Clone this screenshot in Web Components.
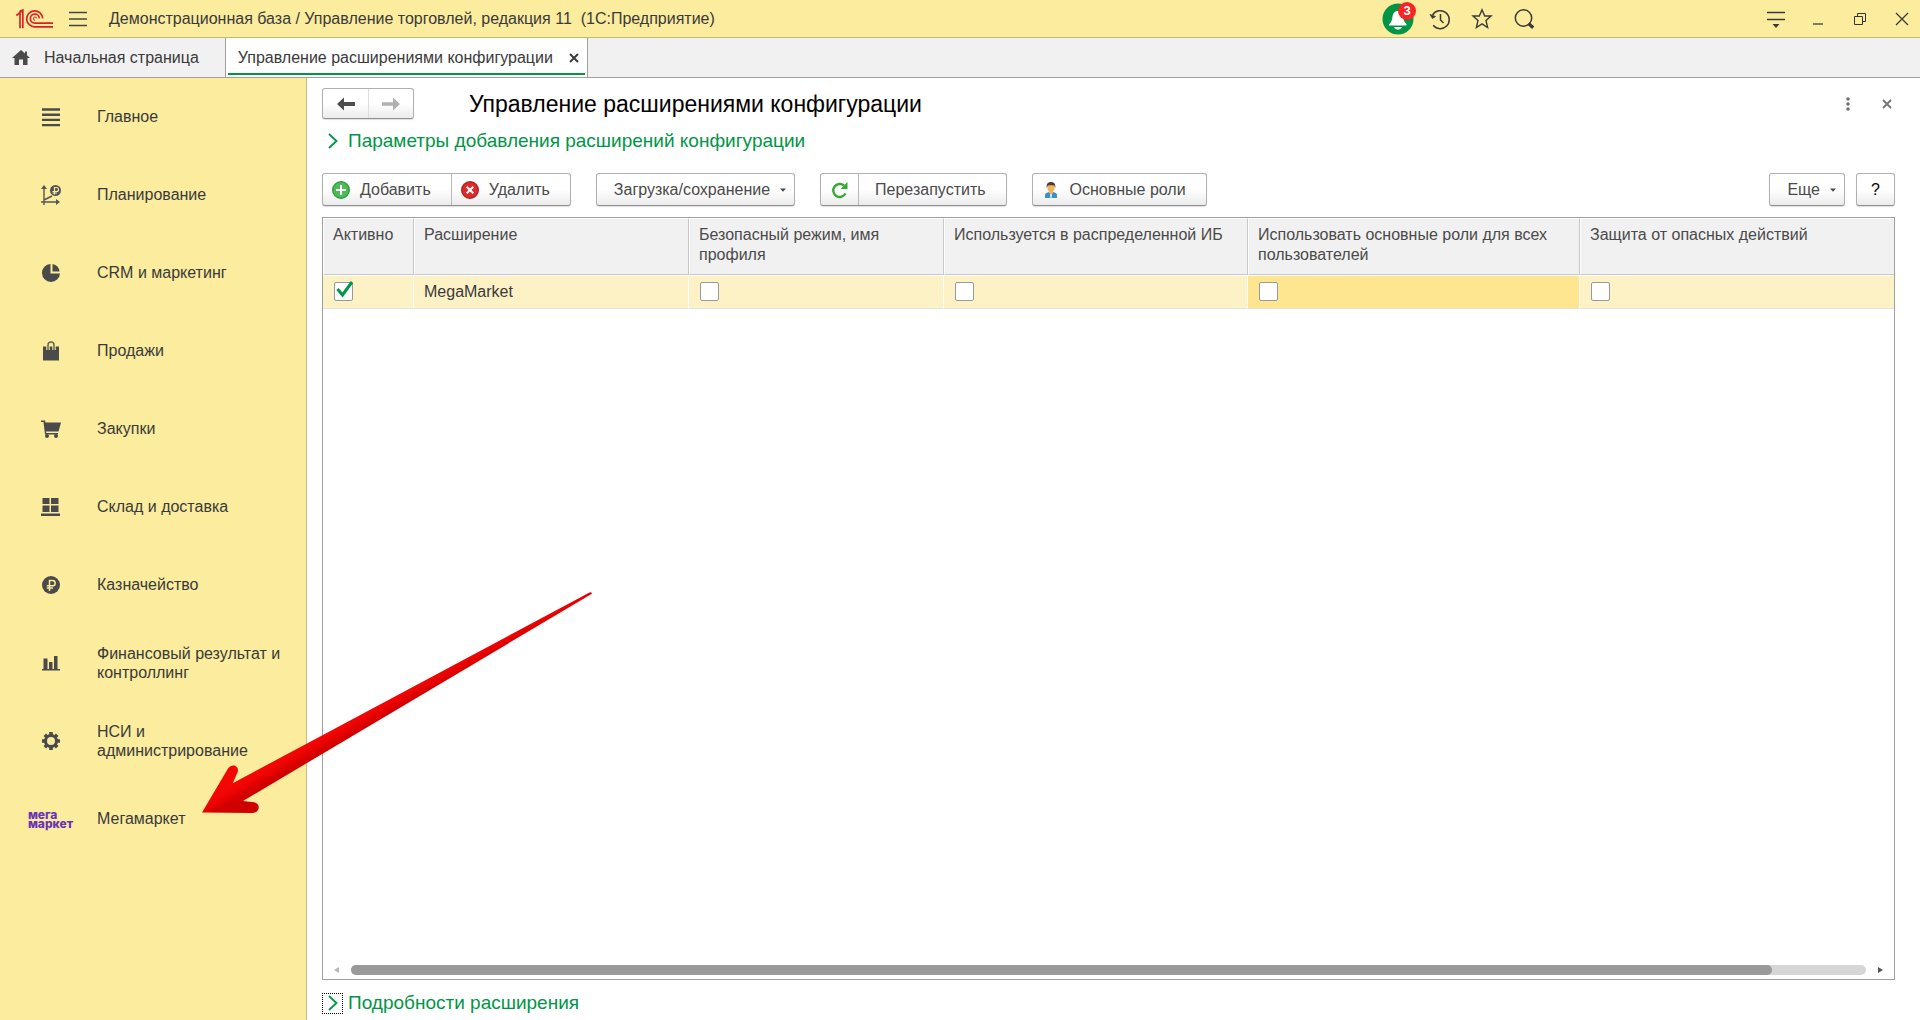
<!DOCTYPE html>
<html lang="ru">
<head>
<meta charset="utf-8">
<title>Управление расширениями конфигурации</title>
<style>
  html, body { height: 100%; }
  body {
    margin: 0; background: #fff; color: #3a3a3a; overflow: hidden;
    font: 16px/20px "Liberation Sans", Arial, sans-serif;
    --brand: #fbec9e; --line: #a0a0a0; --green: #009646; --ink: #4a4a4a;
  }
</style>
</head>
<body>
<ext-app></ext-app>
<script>
const base = `
  *, *::before, *::after { box-sizing: border-box; }
  button { font: inherit; color: inherit; background: none; border: 0; padding: 0; margin: 0; cursor: pointer; display: flex; align-items: center; }
  a { color: inherit; text-decoration: none; }
  svg { display: block; flex: none; }
`;
class Base extends HTMLElement {
  connectedCallback() {
    if (this.shadowRoot) return;
    const t = document.createElement('template');
    t.innerHTML = `<style>${base}${this.css()}</style>${this.html()}`;
    this.attachShadow({ mode: 'open' }).append(t.content.cloneNode(true));
  }
}

const icons = {
  logo: `<svg width="38" height="20" viewBox="0 0 114 60" fill="none" stroke="#dc1f26" stroke-width="5"><path d="M4 19.500 15 11V58M13 7.500 23.500 3V58M14 8H25"/><path d="M83 28A24 24 0 1 0 60 53.500H114"/><path d="M73 28A13.500 13.500 0 1 0 60 42.500H114"/><path d="M60 34A5 5 0 1 1 65 28" stroke-width="3"/></svg>`,
  menu: `<svg width="18" height="16" viewBox="0 0 18 16"><path d="M0 1.500H18M0 8H18M0 14.500H18" stroke="#444" stroke-width="1.500"/></svg>`,
  home: `<svg width="18" height="15" viewBox="0 0 18 15"><path d="M9 0 0 8H2.500V15H7V9.500H11V15H15.500V8H18L15 5.300V1.500H13V3.600Z" fill="#4a4a4a"/></svg>`,
  bell: `<svg width="32" height="32" viewBox="0 0 32 32"><circle cx="16" cy="16" r="15.500" fill="#009646"/><path d="M15.500 8c-3 0-4.500 2.500-5 5.500-.5 3.500-1 5.500-3.500 8V22.500H24.500V21c-2.500-2-3-4-3.500-7.500C20.500 10.500 18.500 8 15.500 8ZM12 24H20c-1 2.200-2.500 2.500-4 2.500S13 26 12 24Z" fill="#fff"/></svg>`,
  history: `<svg width="22" height="22" viewBox="0 0 22 22" fill="none" stroke="#3a3a3a" stroke-width="1.500"><path d="M3.600 7A9 9 0 1 1 4.200 17.300M11.500 6V12L14.500 15"/><path d="M1 6.500 6.500 8.500 3.500 10.500Z" fill="#3a3a3a" stroke-width=".8"/></svg>`,
  star: `<svg width="22" height="22" viewBox="0 0 22 22" fill="none" stroke="#3a3a3a" stroke-width="1.400"><path d="M11 1.800 13.700 8H20L15 12.400 16.600 19.500 11 15.800 5.400 19.500 7 12.400 2 8H8.300Z"/></svg>`,
  search: `<svg width="22" height="22" viewBox="0 0 22 22" fill="none" stroke="#3a3a3a"><circle cx="10.500" cy="10" r="8.200" stroke-width="1.500"/><path d="M15.500 15.500 20.200 19.800" stroke-width="3.200"/></svg>`,
  settings: `<svg width="18" height="18" viewBox="0 0 18 18"><path d="M0 2.500H18M0 9.500H18" stroke="#3a3a3a" stroke-width="1.500"/><path d="M5.500 14H12.500L9 18Z" fill="#3a3a3a"/></svg>`,
  minimize: `<svg width="12" height="12" viewBox="0 0 12 12"><path d="M1 11H11" stroke="#3a3a3a" stroke-width="1.300"/></svg>`,
  restore: `<svg width="12" height="12" viewBox="0 0 12 12" fill="none" stroke="#333"><path d="M.5 3.500H8.500V11.500H.5ZM3.500 3.500V.5H11.500V8.500H8.500"/></svg>`,
  close: `<svg width="14" height="14" viewBox="0 0 14 14"><path d="M1 1 13 13M13 1 1 13" stroke="#3a3a3a" stroke-width="1.300"/></svg>`,
  smallClose: `<svg width="10" height="10" viewBox="0 0 10 10"><path d="M1 1 9 9M9 1 1 9" stroke="currentColor" stroke-width="1.900"/></svg>`,
  dots: `<svg width="4" height="14" viewBox="0 0 4 14" fill="#707070"><circle cx="2" cy="2" r="1.800"/><circle cx="2" cy="7" r="1.800"/><circle cx="2" cy="12" r="1.800"/></svg>`,
  back: `<svg width="18" height="14" viewBox="0 0 18 14"><path d="M0 7 7 .5V5H18V9H7V13.500Z" fill="#4d4d4d"/></svg>`,
  forward: `<svg width="18" height="14" viewBox="0 0 18 14"><path d="M18 7 11 .5V5.200H0V8.800H11V13.500Z" fill="#b0b0b0"/></svg>`,
  chevron: `<svg width="10" height="16" viewBox="0 0 10 16"><path d="M1 1 8.500 8 1 15" fill="none" stroke="#009646" stroke-width="1.800"/></svg>`,
  add: `<svg width="18" height="18" viewBox="0 0 18 18"><circle cx="9" cy="9" r="8.300" fill="#4dbb58" stroke="#2f9e40" stroke-width="1.400"/><path d="M9 4V14M4 9H14" stroke="#fff" stroke-width="2"/></svg>`,
  remove: `<svg width="18" height="18" viewBox="0 0 18 18"><circle cx="9" cy="9" r="8.300" fill="#dc2b2b" stroke="#b82020" stroke-width="1.400"/><path d="M5.700 5.700 12.300 12.300M12.300 5.700 5.700 12.300" stroke="#fff" stroke-width="2"/></svg>`,
  refresh: `<svg width="18" height="18" viewBox="0 0 18 18"><path d="M14.500 12.500A6.500 6.500 0 1 1 13 4.500" fill="none" stroke="#35a835" stroke-width="2.400"/><path d="M16.500 1V8H9.500Z" fill="#35a835"/></svg>`,
  user: `<svg width="12" height="16" viewBox="0 0 12 16"><path d="M0 16V13C0 11 2 10.500 4 10H8C10 10.500 12 11 12 13V16Z" fill="#3a8fc4"/><path d="M4 9H8V10.500L6 13.500 4 10.500Z" fill="#f0b45c"/><ellipse cx="6" cy="5.500" rx="3.600" ry="4.500" fill="#f0b45c"/><path d="M1.800 6C1 2 3 0 6 0S11 2 10.200 6L9.200 3.600C7 3 5 3 2.800 3.600Z" fill="#4d4033"/><path d="M5 13 6 11.800 7 13 6.500 16H5.500Z" fill="#e8f2f8"/></svg>`,
  caret: `<svg width="6" height="4" viewBox="0 0 6 4"><path d="M0 .5H6L3 3.800Z" fill="#4a4a4a"/></svg>`,
  main: `<svg width="20" height="20" viewBox="0 0 20 20" stroke="#4a4a4a" stroke-width="2.400"><path d="M1 2.500H19M1 7.700H19M1 12.900H19M1 18.100H19"/></svg>`,
  plan: `<svg width="20" height="20" viewBox="0 0 20 20" fill="none" stroke="#555"><path d="M3 20V3M0 17H17M3 15 8 12.500 11 11" stroke-width="1.400"/><path d="M3 0 6 4H0ZM19 17 15 14V20Z" fill="#555" stroke="none"/><circle cx="14.500" cy="5.500" r="5.500" fill="#555" stroke="none"/><path d="M13.500 9.500V2.500H15.500A2 2 0 0 1 15.500 6.500H11.500M11.500 8H16" stroke="#fbec9e" stroke-width="1.100"/></svg>`,
  pie: `<svg width="18" height="18" viewBox="0 0 18 18" fill="#4a4a4a"><path d="M8.500 0V9.500H18A9 9 0 1 1 8.500 0Z"/><path d="M10.500 0A8.500 8.500 0 0 1 17.500 7.500H10.500Z"/></svg>`,
  bag: `<svg width="16" height="20" viewBox="0 0 16 20"><path d="M0 5.500H16V19.500H0Z" fill="#4a4a4a"/><path d="M5 9V4.500C5 0 11 0 11 4.500V9" fill="none" stroke="#fbec9e" stroke-width="3.400"/><path d="M5 9V4C5 0 11 0 11 4V9" fill="none" stroke="#6a6650" stroke-width="1.500"/></svg>`,
  cart: `<svg width="20" height="18" viewBox="0 0 20 18"><path d="M0 .5H4L4.500 2.500H20L17.500 11.500H5L5.200 13H17V14.500H4L2.500 2H0Z" fill="#4a4a4a"/><circle cx="6" cy="16" r="2" fill="#4a4a4a"/><circle cx="15" cy="16" r="2" fill="#4a4a4a"/></svg>`,
  stock: `<svg width="20" height="18" viewBox="0 0 20 18" fill="#4a4a4a"><path d="M1.500 0H8.500V6H1.500ZM10 0H17.500V6H10ZM1.500 7.500H8.500V14H1.500ZM10 7.500H17.500V14H10ZM0 15.500H19V18H0Z"/></svg>`,
  rouble: `<svg width="18" height="18" viewBox="0 0 18 18"><circle cx="9" cy="9" r="9" fill="#4a4a4a"/><path d="M7.500 15V4.500H10.500A2.500 2.500 0 0 1 10.500 9.800H4.800M4.800 12H11" fill="none" stroke="#fbec9e" stroke-width="1.500"/></svg>`,
  bars: `<svg width="18" height="16" viewBox="0 0 18 16" fill="#4a4a4a"><path d="M1.500 3.500H5.500V14H1.500ZM7 7H10.500V14H7ZM12 1H15.500V14H12ZM0 14H18V15.500H0Z"/></svg>`,
  gear: `<svg width="18" height="18" viewBox="-9 -9 18 18"><circle r="5.500" fill="none" stroke="#4a4a4a" stroke-width="3"/><path d="M0-9V-6M0 9V6M-9 0H-6M9 0H6M-6.200-6.200-4.500-4.500M6.200 6.200 4.500 4.500M-6.200 6.200-4.500 4.500M6.200-6.200 4.500-4.500" stroke="#4a4a4a" stroke-width="3.600"/></svg>`,
};

customElements.define('ui-icon', class extends Base {
  css() { return ':host { display: inline-flex; flex: none; align-items: center; justify-content: center; }'; }
  html() { return icons[this.getAttribute('name')]; }
});

customElements.define('title-bar', class extends Base {
  css() { return `
    :host { display: flex; align-items: center; height: 38px; padding: 0 2px 0 15px; background: var(--brand); border-bottom: 1px solid #c8b968; }
    .menu { margin: 0 22px 0 16px; }
    .name { flex: 1; white-space: pre; }
    .set { display: flex; gap: 10px; }
    .set + .set { margin-left: 220px; }
    .set button { width: 32px; height: 36px; justify-content: center; position: relative; }
    .badge { position: absolute; left: 16px; top: 1px; width: 18px; height: 18px; border-radius: 9px; background: #fb2424; color: #fff; font: bold 13px/18px "Liberation Sans", Arial, sans-serif; text-align: center; }
  `; }
  html() { return `
    <ui-icon name="logo"></ui-icon>
    <button class="menu" aria-label="Меню"><ui-icon name="menu"></ui-icon></button>
    <span class="name">Демонстрационная база / Управление торговлей, редакция 11  (1С:Предприятие)</span>
    <div class="set">
      <button aria-label="Оповещения"><ui-icon name="bell"></ui-icon><span class="badge">3</span></button>
      <button aria-label="История"><ui-icon name="history"></ui-icon></button>
      <button aria-label="Избранное"><ui-icon name="star"></ui-icon></button>
      <button aria-label="Поиск"><ui-icon name="search"></ui-icon></button>
    </div>
    <div class="set">
      <button aria-label="Настройки"><ui-icon name="settings"></ui-icon></button>
      <button aria-label="Свернуть"><ui-icon name="minimize"></ui-icon></button>
      <button aria-label="Восстановить"><ui-icon name="restore"></ui-icon></button>
      <button aria-label="Закрыть"><ui-icon name="close"></ui-icon></button>
    </div>`; }
});

customElements.define('tab-bar', class extends Base {
  css() { return `
    :host { display: flex; height: 40px; background: #f1f1f1; border-bottom: 1px solid var(--line); }
    .tab { display: flex; align-items: center; }
    .home { gap: 14px; padding: 0 26px 0 12px; }
    .active { gap: 16px; padding: 0 8px 0 12px; background: #fff; border: solid var(--line); border-width: 0 1px; position: relative; }
    .active::after { content: ""; position: absolute; left: 2px; right: 2px; bottom: 2px; height: 2px; background: var(--green); }
  `; }
  html() { return `
    <a class="tab home" href="#home"><ui-icon name="home"></ui-icon>Начальная страница</a>
    <div class="tab active"><a href="#ext">Управление расширениями конфигурации</a><button aria-label="Закрыть вкладку"><ui-icon name="smallClose"></ui-icon></button></div>`; }
});

customElements.define('nav-item', class extends Base {
  css() { return `
    :host { display: block; }
    a { display: flex; align-items: center; height: 78px; line-height: 19px; }
    .pic { width: 97px; flex: none; display: flex; justify-content: center; padding-left: 4px; }
    .text { padding: 0 10px 1px 0; }
    .mega { font: 800 12px/9px Inter, "Liberation Sans", sans-serif; color: #6b32b8; }
  `; }
  html() {
    const n = this.getAttribute('icon');
    const pic = n === 'mega' ? '<span class="mega">мега<br>маркет</span>' : `<ui-icon name="${n}"></ui-icon>`;
    return `<a href="#"><span class="pic">${pic}</span><span class="text"><slot></slot></span></a>`;
  }
});

customElements.define('side-nav', class extends Base {
  css() { return ':host { display: block; width: 307px; flex: none; background: var(--brand); border-right: 1px solid #c9bd80; } nav { display: block; }'; }
  html() {
    const list = [['main','Главное'],['plan','Планирование'],['pie','CRM и маркетинг'],['bag','Продажи'],['cart','Закупки'],['stock','Склад и доставка'],['rouble','Казначейство'],['bars','Финансовый результат и контроллинг'],['gear','НСИ и администрирование'],['mega','Мегамаркет']];
    return `<nav>${list.map(([i, t]) => `<nav-item icon="${i}">${t}</nav-item>`).join('')}</nav>`;
  }
});

customElements.define('tool-group', class extends Base {
  css() { return `
    :host { display: inline-flex; box-sizing: border-box; height: 33px; border: 1px solid #b0b0b0; border-bottom-color: #909090; border-radius: 3px; background: linear-gradient(#fff 50%, #ebebeb); box-shadow: 0 1px 1px #0002; color: var(--ink); }
  `; }
  html() { return '<slot></slot>'; }
});

customElements.define('check-box', class extends Base {
  css() { return `
    :host { display: inline-block; position: relative; width: 19px; height: 19px; vertical-align: top; }
    input { appearance: none; margin: 0; width: 19px; height: 19px; display: block; background: #fff; border: 1px solid #999; border-radius: 2px; }
    svg { position: absolute; left: 2px; top: -2px; pointer-events: none; display: none; }
    input:checked + svg { display: block; }
  `; }
  html() { return `<input type="checkbox" aria-label="${this.getAttribute('label')}" ${this.hasAttribute('checked') ? 'checked' : ''}>
    <svg width="17" height="18" viewBox="0 0 17 18"><path d="M1.500 9 6.500 15 16 2" fill="none" stroke="#009646" stroke-width="3"/></svg>`; }
});

customElements.define('group-title', class extends Base {
  css() { return `
    :host { display: block; }
    button { gap: 5px; height: 22px; color: var(--green); font-size: 19px; line-height: 22px; }
    .mark { width: 21px; height: 21px; display: grid; place-items: center; }
    :host([focused]) .mark { border: 1px dotted #000; }
  `; }
  html() { return '<button aria-expanded="false"><span class="mark"><ui-icon name="chevron"></ui-icon></span><slot></slot></button>'; }
});

customElements.define('ext-table', class extends Base {
  css() { return `
    :host { display: flex; flex-direction: column; border: 1px solid var(--line); min-height: 0; }
    table { width: 100%; table-layout: fixed; border-collapse: separate; border-spacing: 0; }
    th, td { text-align: left; font-weight: normal; vertical-align: top; padding: 0 4px 0 10px; }
    th { height: 57px; padding: 6px 4px 0 9px; background: #f1f1f1; color: var(--ink); border: 1px solid #fff; border-right-color: #c8c8c8; border-bottom-color: #c8c8c8; }
    td { height: 34px; padding-top: 6px; background: #fdf2c6; border: solid #fff; border-width: 1px 1px 0 0; border-bottom: 1px solid #e2e2e2; line-height: 19px; }
    th:last-child, td:last-child { border-right: 0; }
    td.current { background: #fee590; }
    check-box { margin-left: 1px; }
    .scroll { margin-top: auto; display: flex; align-items: center; height: 19px; padding: 0 11px; gap: 12px; }
    .track { flex: 1; height: 10px; border-radius: 5px; background: #d6d6d6; margin: 0; }
    .thumb { width: 93.8%; height: 10px; border-radius: 5px; background: #999; }
  `; }
  html() {
    const heads = ['Активно', 'Расширение', 'Безопасный режим, имя профиля', 'Используется в распределенной ИБ', 'Использовать основные роли для всех пользователей', 'Защита от опасных действий'];
    const box = i => `<check-box label="${heads[i]}" ${i ? '' : 'checked'}></check-box>`;
    return `<table>
      <colgroup><col style="width:91px"><col style="width:275px"><col style="width:255px"><col style="width:304px"><col style="width:332px"><col></colgroup>
      <thead><tr>${heads.map(h => `<th scope="col">${h}</th>`).join('')}</tr></thead>
      <tbody><tr><td>${box(0)}</td><td>MegaMarket</td><td>${box(2)}</td><td>${box(3)}</td><td class="current">${box(4)}</td><td>${box(5)}</td></tr></tbody>
    </table>
    <div class="scroll">
      <svg width="5" height="6" viewBox="0 0 5 6"><path d="M5 0V6L0 3Z" fill="#b8b8b8"/></svg>
      <div class="track"><div class="thumb"></div></div>
      <svg width="5" height="6" viewBox="0 0 5 6"><path d="M0 0V6L5 3Z" fill="#555"/></svg>
    </div>`;
  }
});

customElements.define('ext-page', class extends Base {
  css() { return `
    :host { display: flex; flex-direction: column; flex: 1; min-width: 0; padding: 10px 25px 6px 15px; }
    .head { display: flex; align-items: center; height: 31px; }
    .head tool-group { height: 31px; }
    h1 { flex: 1; margin: 0 0 0 55px; font-size: 23px; line-height: 26px; font-weight: normal; color: #000; }
    .actions { display: flex; gap: 32px; padding-right: 3px; color: #777; }
    .first { margin: 11px 0 21px; }
    .tools { display: flex; gap: 25px; margin-bottom: 11px; }
    .right { margin-left: auto; display: flex; gap: 11px; }
    tool-group button { padding: 0 20px 0 9px; gap: 10px; }
    tool-group button + button { border-left: 1px solid #b8b8b8; }
    tool-group .plain { padding: 0 20px 0 16px; }
    tool-group .drop { padding: 0 8px 0 17px; }
    tool-group .square { width: 37px; padding: 0; justify-content: center; color: #000; }
    tool-group .half { width: 45px; padding: 0; justify-content: center; }
    tool-group .half + .half { border-left-color: #dcdcdc; }
    ext-table { flex: 1; margin-bottom: 12px; }
    ui-icon[name=user], ui-icon[name=add], ui-icon[name=remove] { width: 18px; }
  `; }
  html() { return `
    <div class="head">
      <tool-group><button class="half" aria-label="Назад"><ui-icon name="back"></ui-icon></button><button class="half" aria-label="Вперед"><ui-icon name="forward"></ui-icon></button></tool-group>
      <h1>Управление расширениями конфигурации</h1>
      <div class="actions"><button aria-label="Еще действия"><ui-icon name="dots"></ui-icon></button><button aria-label="Закрыть"><ui-icon name="smallClose"></ui-icon></button></div>
    </div>
    <group-title class="first">Параметры добавления расширений конфигурации</group-title>
    <div class="tools">
      <tool-group><button><ui-icon name="add"></ui-icon>Добавить</button><button><ui-icon name="remove"></ui-icon>Удалить</button></tool-group>
      <tool-group><button class="drop">Загрузка/сохранение<ui-icon name="caret"></ui-icon></button></tool-group>
      <tool-group><button class="square" aria-label="Обновить"><ui-icon name="refresh"></ui-icon></button><button class="plain">Перезапустить</button></tool-group>
      <tool-group><button><ui-icon name="user"></ui-icon>Основные роли</button></tool-group>
      <div class="right">
        <tool-group><button class="drop">Еще<ui-icon name="caret"></ui-icon></button></tool-group>
        <tool-group><button class="square">?</button></tool-group>
      </div>
    </div>
    <ext-table></ext-table>
    <group-title focused>Подробности расширения</group-title>`; }
});

/* Callout arrow laid over the page, pointing at the last section. */
customElements.define('callout-arrow', class extends Base {
  css() { return ':host { position: absolute; left: 200px; top: 590px; pointer-events: none; }'; }
  html() { return `<svg width="396" height="226" viewBox="200 590 396 226" aria-hidden="true">
    <defs><linearGradient id="g" gradientUnits="userSpaceOnUse" x1="318" y1="737.400" x2="326" y2="751.600"><stop offset="0" stop-color="#f40606"/><stop offset=".35" stop-color="#ee0303"/><stop offset=".75" stop-color="#d60000"/><stop offset="1" stop-color="#cf0000"/></linearGradient></defs>
    <path fill="url(#g)" d="M202 812.500 228 768.500C232 762.500 240 766 237.500 772.500L232.700 783.200 590 592.200Q592.500 592 591.500 594L243 801 254 802.200C261 803.500 260 812.500 253 813Z"/></svg>`; }
});

customElements.define('ext-app', class extends Base {
  css() { return ':host { display: flex; flex-direction: column; height: 100vh; position: relative; } .body { flex: 1; display: flex; min-height: 0; }'; }
  html() { return '<title-bar></title-bar><tab-bar></tab-bar><div class="body"><side-nav></side-nav><ext-page></ext-page></div><callout-arrow></callout-arrow>'; }
});
</script>
</body>
</html>
